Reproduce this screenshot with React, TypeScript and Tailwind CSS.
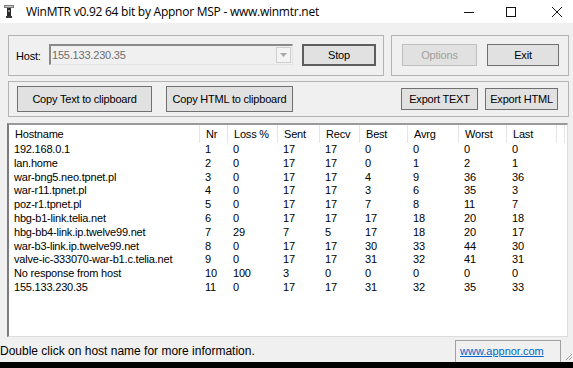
import React from "react";

const rows = [
  ["192.168.0.1", "1", "0", "17", "17", "0", "0", "0", "0"],
  ["lan.home", "2", "0", "17", "17", "0", "1", "2", "1"],
  ["war-bng5.neo.tpnet.pl", "3", "0", "17", "17", "4", "9", "36", "36"],
  ["war-r11.tpnet.pl", "4", "0", "17", "17", "3", "6", "35", "3"],
  ["poz-r1.tpnet.pl", "5", "0", "17", "17", "7", "8", "11", "7"],
  ["hbg-b1-link.telia.net", "6", "0", "17", "17", "17", "18", "20", "18"],
  ["hbg-bb4-link.ip.twelve99.net", "7", "29", "7", "5", "17", "18", "20", "17"],
  ["war-b3-link.ip.twelve99.net", "8", "0", "17", "17", "30", "33", "44", "30"],
  ["valve-ic-333070-war-b1.c.telia.net", "9", "0", "17", "17", "31", "32", "41", "31"],
  ["No response from host", "10", "100", "3", "0", "0", "0", "0", "0"],
  ["155.133.230.35", "11", "0", "17", "17", "31", "32", "35", "33"],
];

const headers = ["Hostname", "Nr", "Loss %", "Sent", "Recv", "Best", "Avrg", "Worst", "Last"];
const colW = ["w-[191px]", "w-[28px]", "w-[50px]", "w-[42px]", "w-[40px]", "w-[48px]", "w-[51px]", "w-[48px]", "w-[50px]"];

function Btn({ label, className = "", disabled = false }: { label: string; className?: string; disabled?: boolean }) {
  return (
    <div
      className={`flex items-center justify-center whitespace-nowrap bg-[#e1e1e1] border ${
        disabled ? "border-[#bfbfbf] text-[#a0a0a0]" : "border-[#707070] text-black"
      } ${className}`}
    >
      {label}
    </div>
  );
}

export default function App() {
  return (
    <div className="w-[573px] h-[368px] overflow-hidden bg-[#f0f0f0] flex flex-col font-['Liberation_Sans',Arial,sans-serif] text-[11px] tracking-[-0.2px] text-black">
      {/* title bar */}
      <div className="h-[23px] bg-white flex items-center shrink-0 tracking-normal">
        <svg className="ml-[4px]" width="10" height="13" viewBox="0 0 10 13">
          <rect x="0" y="0" width="10" height="3" fill="#7a7a7a" />
          <rect x="1" y="1" width="8" height="1" fill="#c8c8c8" />
          <rect x="3" y="3" width="4" height="9" fill="#2a2a2a" />
          <rect x="2" y="11" width="6" height="2" fill="#3a3a3a" />
          <rect x="4" y="5" width="2" height="2" fill="#8a8a8a" />
        </svg>
        <span className="ml-[12px] text-[12px] font-['Open_Sans',sans-serif] tracking-[-0.25px]">
          WinMTR v0.92 64 bit by Appnor MSP - www.winmtr.net
        </span>
        <div className="ml-auto flex items-center h-full">
          <svg className="mr-[32px]" width="10" height="10" viewBox="0 0 10 10">
            <line x1="0" y1="5.5" x2="10" y2="5.5" stroke="#111" strokeWidth="1" />
          </svg>
          <svg className="mr-[36px]" width="10" height="10" viewBox="0 0 10 10">
            <rect x="0.5" y="0.5" width="9" height="9" fill="none" stroke="#111" strokeWidth="1" />
          </svg>
          <svg className="mr-[11px]" width="10" height="10" viewBox="0 0 10 10">
            <path d="M0 0 L10 10 M10 0 L0 10" stroke="#111" strokeWidth="1" />
          </svg>
        </div>
      </div>

      {/* top groups */}
      <div className="flex mt-[12px] ml-[8px] gap-[7px]">
        <div className="w-[376px] h-[41px] border border-[#b4b4b4] flex items-start pt-[8px]">
          <span className="ml-[7px] w-[33px] mt-[4px]">Host:</span>
          <div className="w-[244px] h-[21px] border-l-2 border-t-2 border-r border-b border-l-[#8a8a8a] border-t-[#8a8a8a] border-r-[#e3e3e3] border-b-[#e3e3e3] bg-[#f0f0f0] flex items-center">
            <span className="ml-[1px] text-[#6d6d6d]">155.133.230.35</span>
            <div className="ml-auto mr-[1px] w-[15px] h-[16px] border border-[#cfcfcf] bg-[#f4f4f4] flex items-center justify-center">
              <svg width="7" height="4" viewBox="0 0 7 4">
                <path d="M0 0 L7 0 L3.5 4 Z" fill="#a8a8a8" />
              </svg>
            </div>
          </div>
          <div className="ml-[9px] w-[74px] h-[22px] border-2 border-[#5e5e5e] bg-[#e1e1e1] flex items-center justify-center">
            Stop
          </div>
        </div>
        <div className="w-[178px] h-[41px] border border-[#b4b4b4] flex items-start pt-[8px] pl-[10px] gap-[10px]">
          <Btn label="Options" disabled className="w-[75px] h-[22px]" />
          <Btn label="Exit" className="w-[72px] h-[22px]" />
        </div>
      </div>

      {/* copy / export group */}
      <div className="mt-[5px] ml-[8px] w-[561px] h-[36px] border border-[#b4b4b4] flex items-center pl-[8px]">
        <Btn label="Copy Text to clipboard" className="w-[135px] h-[26px]" />
        <Btn label="Copy HTML to clipboard" className="ml-[14px] w-[127px] h-[26px]" />
        <Btn label="Export TEXT" className="ml-[108px] w-[77px] h-[22px]" />
        <Btn label="Export HTML" className="ml-[7px] w-[73px] h-[22px]" />
      </div>

      {/* list */}
      <div className="mt-[6px] ml-[7px] w-[561px] h-[214px] bg-white border-l-2 border-t-2 border-r border-b border-l-[#7d7d7d] border-t-[#9a9a9a] border-r-[#dcdcdc] border-b-[#dcdcdc] overflow-hidden">
        <div className="flex h-[18px]">
          {headers.map((h, i) => (
            <div key={h} className={`${colW[i]} shrink-0 h-full border-r border-[#e5e5e5] pl-[6px] flex items-center`}>
              {h}
            </div>
          ))}
          <div className="w-[8px] h-full border-r border-[#e5e5e5]" />
        </div>
        {rows.map((r) => (
          <div key={r[1]} className="flex h-[13.8px] items-center">
            {r.map((c, i) => (
              <div key={i} className={`${colW[i]} shrink-0 pl-[5px] whitespace-nowrap leading-[13.8px]`}>
                {c}
              </div>
            ))}
          </div>
        ))}
      </div>

      {/* status bar */}
      <div className="flex h-[25px] items-end tracking-normal">
        <div className="w-[453px] h-[22px] flex items-center text-[12px]">
          Double click on host name for more information.
        </div>
        <div className="ml-[2px] w-[106px] h-[22px] border-l border-t border-r border-[#a0a0a0] flex items-center pl-[4px]">
          <span className="text-[#0066cc] underline">www.appnor.com</span>
        </div>
        <svg className="ml-auto mb-[1px]" width="8" height="8" viewBox="0 0 8 8">
          <path d="M7 1 L1 7 M7 4 L4 7" stroke="#a0a0a0" strokeWidth="1" />
        </svg>
      </div>
      <div className="h-[6px] bg-black shrink-0" />
    </div>
  );
}
